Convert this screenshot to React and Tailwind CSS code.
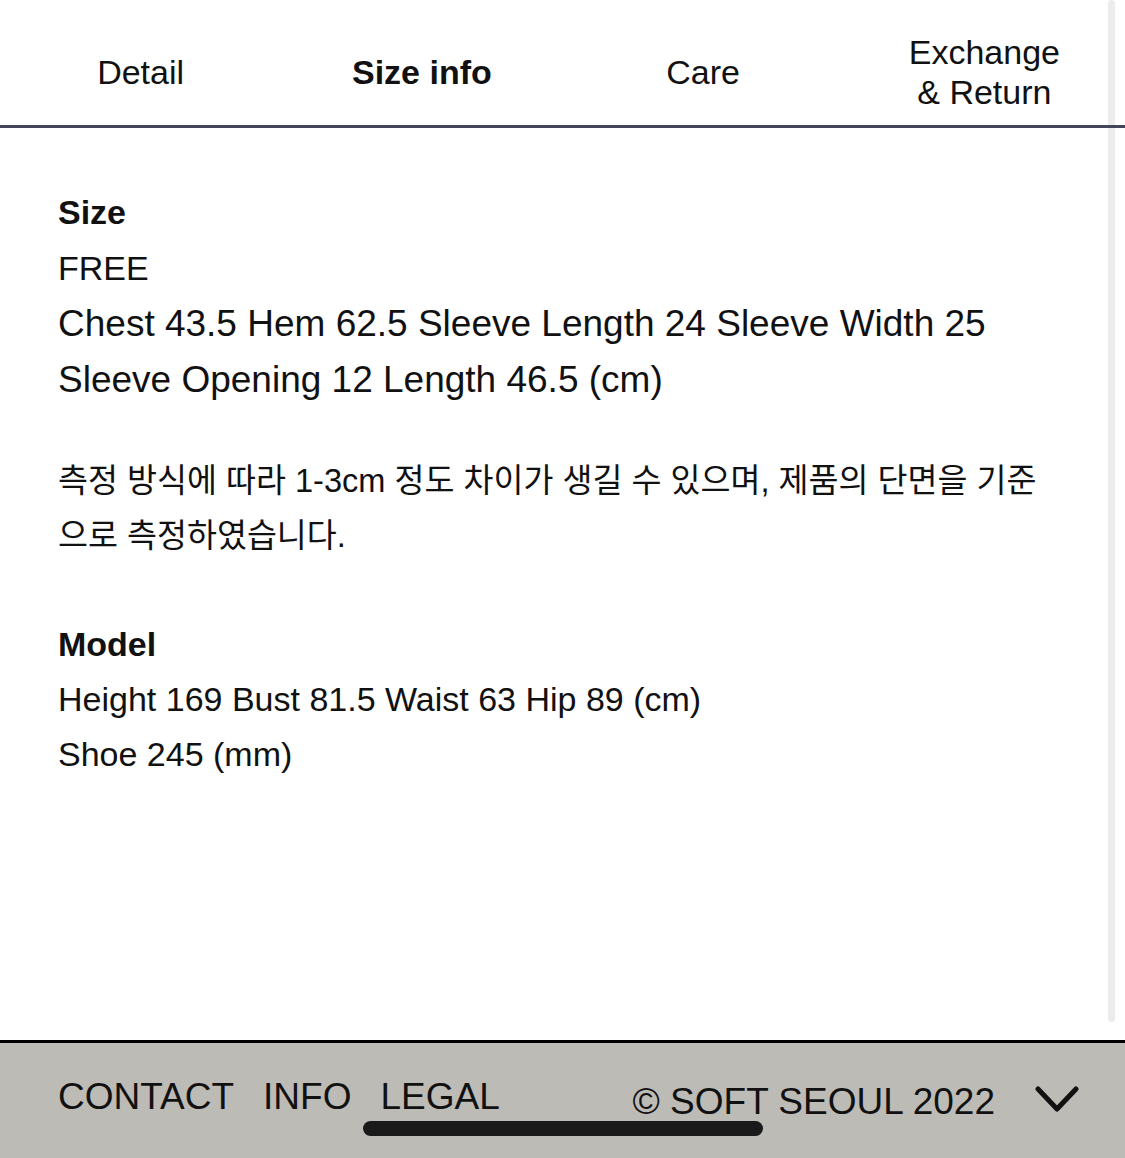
import React from 'react';

const tabs = [
  { key: 'detail', label: 'Detail' },
  { key: 'size', label: 'Size info', active: true },
  { key: 'care', label: 'Care' },
  { key: 'exchange', label: ['Exchange', '& Return'] }
];

export default function App() {
  return <div className="relative w-[1125px] h-[1158px] bg-white text-[#111] overflow-hidden flex flex-col" style={{ fontFamily: '"Liberation Sans", Arial, "Noto Sans CJK KR", sans-serif' }}>
      {/* 스크롤바 */}
      <div className="absolute right-[10px] top-0 w-[7px] h-[1022px] rounded-full bg-[#ececec]" />

      <div className="relative z-10 grid grid-cols-4 h-[128px] border-b-[3px] border-[#44445a] shrink-0">
        {tabs.map(tab => <div key={tab.key} className={`flex flex-col items-center justify-center pt-[19px] text-[34px] leading-[40px] ${tab.active ? 'font-bold' : ''}`}>
            {Array.isArray(tab.label) ? tab.label.map(l => <span key={l}>{l}</span>) : tab.label}
          </div>)}
      </div>

      <div className="flex-1 pl-[58px] pr-[60px] pt-[56px]">
        <div className="leading-[56px] text-[34px]">
          <div className="font-bold">Size</div>
          <div>FREE</div>
          <div className="text-[37px]">Chest 43.5 Hem 62.5 Sleeve Length 24 Sleeve Width 25</div>
          <div className="text-[37px]">Sleeve Opening 12 Length 46.5 (cm)</div>
        </div>
        <p className="mt-[45px] leading-[55px] text-[32.6px] w-[1000px]">
          측정 방식에 따라 1-3cm 정도 차이가 생길 수 있으며, 제품의 단면을 기준으로 측정하였습니다.
        </p>
        <div className="mt-[54px] leading-[55px] text-[34px]">
          <div className="font-bold">Model</div>
          <div>Height 169 Bust 81.5 Waist 63 Hip 89 (cm)</div>
          <div>Shoe 245 (mm)</div>
        </div>
      </div>

      <div className="relative h-[118px] shrink-0 border-t-[3px] border-black bg-[#bdbbb6] flex items-start pt-[34px] pl-[58px] pr-[46px] text-[37px] leading-[40px]">
        <div className="flex gap-[29px]">
          <span>CONTACT</span>
          <span>INFO</span>
          <span>LEGAL</span>
        </div>
        <span className="ml-auto mt-[5px]">© SOFT SEOUL 2022</span>
        <svg className="ml-[40px] mt-[7px]" width="44" height="30" viewBox="0 0 44 30" fill="none">
          <polyline points="3,5 22,25 41,5" stroke="#111" strokeWidth="5" strokeLinecap="round" strokeLinejoin="round" />
        </svg>
        <div className="absolute left-[363px] top-[78px] w-[400px] h-[15px] rounded-full bg-[#1a1a1a]" />
      </div>
    </div>;
}
